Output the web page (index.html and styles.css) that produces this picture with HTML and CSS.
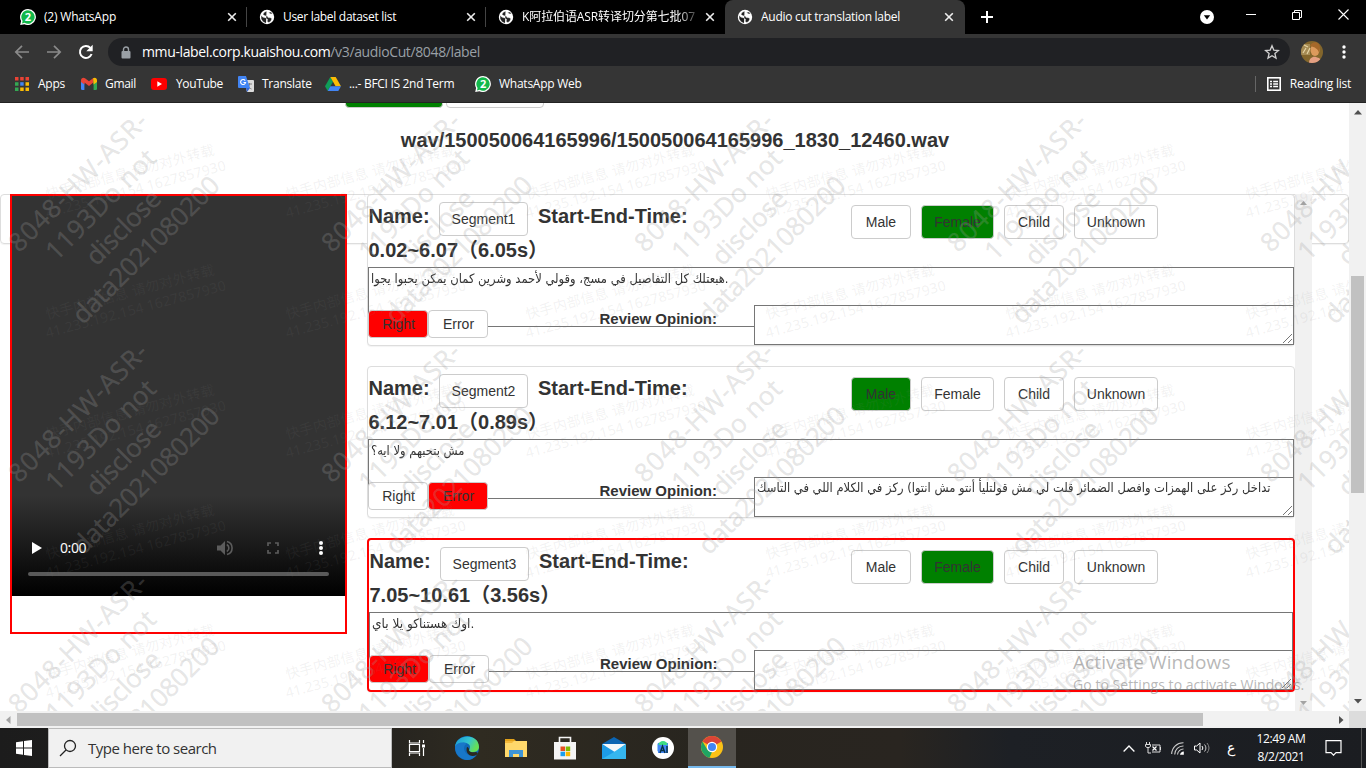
FILE: index.html
```html
<!DOCTYPE html>
<html lang="en">
<head>
<meta charset="utf-8">
<title>Audio cut translation label</title>
<link rel="stylesheet" href="styles.css">
</head>
<body>
<svg class="defs" width="0" height="0" aria-hidden="true">
  <defs>
    <symbol id="globe" viewBox="0 0 16 16"><circle cx="8" cy="8" r="7.2" fill="#fff"/><path d="M7.5 2.2 5 3.6 4 5.6l2 1.2 2.2.2L9 8.6l2.4.2 1.4 1-.9 2.2-2 1.5-1.6-1 .3-2.2L6.800 9 4 8.200 2 6.500 2.200 10 4 12.800 7 14.300 M9.500 3.400l1.800 1.300 2.200.3-1.500-2z" fill="#222" stroke="#fff" stroke-width=".3"/></symbol>
    <symbol id="close" viewBox="0 0 10 10"><path d="M1.200 1.200l7.600 7.600M8.800 1.200L1.200 8.800" stroke="#eee" stroke-width="1.600" fill="none"/></symbol>
    <symbol id="wa" viewBox="0 0 16 16"><path d="M8 0a8 8 0 1 1-3.600 15.200L.2 16l.9-4A8 8 0 0 1 8 0z" fill="#fff"/><path d="M8 1.300a6.700 6.700 0 1 1-3.400 12.500l-2.600.6.600-2.500A6.700 6.700 0 0 1 8 1.300z" fill="#12b84a"/><text x="8" y="12" text-anchor="middle" font-family="Open Sans, sans-serif" font-weight="700" font-size="11" fill="#fff">2</text></symbol>
  </defs>
</svg>

<header class="browser">
  <div class="tabs">
    <div class="tab"><svg class="fav"><use href="#wa"/></svg><span class="tab-title t1">(2) WhatsApp</span><svg class="x"><use href="#close"/></svg></div>
    <div class="tab"><svg class="fav"><use href="#globe"/></svg><span class="tab-title t2">User label dataset list</span><svg class="x"><use href="#close"/></svg></div>
    <div class="tab nosep"><svg class="fav"><use href="#globe"/></svg><span class="tab-title t3">K阿拉伯语ASR转译切分第七批07</span><svg class="x"><use href="#close"/></svg></div>
    <div class="tab active"><svg class="fav"><use href="#globe"/></svg><span class="tab-title t4">Audio cut translation label</span><svg class="x"><use href="#close"/></svg></div>
    <svg class="plus" viewBox="0 0 12 12"><path d="M6 0v12M0 6h12" stroke="#fff" stroke-width="2"/></svg>
    <div class="win">
      <svg width="14" height="14" viewBox="0 0 14 14"><circle cx="7" cy="7" r="7" fill="#fff"/><path d="M3.800 5.200h6.400L7 9.600z" fill="#000"/></svg>
      <svg width="10" height="10" viewBox="0 0 10 10"><path d="M0 4.500h10" stroke="#fff"/></svg>
      <svg width="10" height="10" viewBox="0 0 10 10"><path d="M.5 2.500h7v7h-7zM2.500 2.500v-2h7v7h-2" fill="none" stroke="#fff"/></svg>
      <svg width="11" height="11" viewBox="0 0 11 11"><path d="M.5.5l10 10M10.500.5l-10 10" stroke="#fff" stroke-width="1.100"/></svg>
    </div>
  </div>
  <div class="toolbar">
    <svg class="nav" viewBox="0 0 16 16"><path d="M15 8H2M8 1.800L1.800 8 8 14.200" fill="none" stroke="#8a8a8a" stroke-width="1.700"/></svg>
    <svg class="nav" viewBox="0 0 16 16"><path d="M1 8h13M8 1.800L14.200 8 8 14.200" fill="none" stroke="#8a8a8a" stroke-width="1.700"/></svg>
    <svg class="nav" viewBox="0 0 16 16"><path d="M13.600 10A6 6 0 1 1 12.400 3.900" fill="none" stroke="#fff" stroke-width="2"/><path d="M14.700.8v6.400H8.300z" fill="#fff"/></svg>
    <div class="omnibox">
      <svg width="10" height="13" viewBox="0 0 10 13"><path d="M2.500 5V3.500a2.500 2.500 0 0 1 5 0V5" fill="none" stroke="#9aa0a6" stroke-width="1.400"/><rect x=".5" y="5" width="9" height="7.500" rx="1" fill="#9aa0a6"/></svg>
      <span class="url">mmu-label.corp.kuaishou.com<i>/v3/audioCut/8048/label</i></span>
      <svg class="star" viewBox="0 0 16 16"><path d="M8 1.800l1.800 4.300 4.700.4-3.600 3 1.100 4.600L8 11.700l-4 2.400 1.100-4.600-3.600-3 4.700-.4z" fill="none" stroke="#d0d0d0" stroke-width="1.300"/></svg>
    </div>
    <svg class="avatar" viewBox="0 0 22 22"><defs><clipPath id="av"><circle cx="11" cy="11" r="11"/></clipPath></defs><g clip-path="url(#av)"><rect width="22" height="22" fill="#83662c"/><path d="M0 3h9v11H0z" fill="#a58b54"/><path d="M2 12l3-5M6 13l3-6M3 4l4 2" stroke="#e4d3a4" stroke-width="1.200"/><path d="M8 22c0-5 4-7 7-6s6 2 7 6z" fill="#e5a083"/><ellipse cx="14" cy="9" rx="4.500" ry="6" fill="#dc9a5c"/><path d="M9 5c2-5 9-5 10 1l-1 6c-1-4-4-6-9-7z" fill="#a5682a"/></g></svg>
    <svg class="dots" viewBox="0 0 4 14"><circle cx="2" cy="2" r="1.700" fill="#fff"/><circle cx="2" cy="7" r="1.700" fill="#fff"/><circle cx="2" cy="12" r="1.700" fill="#fff"/></svg>
  </div>
  <div class="bookmarks">
    <div class="bm"><svg class="bi" viewBox="0 0 14 14"><path fill="#ea4335" d="M0 0h3.500v3.500H0zM5.200 0h3.500v3.500H5.200zM10.500 0H14v3.500h-3.500z"/><path fill="#34a853" d="M0 5.200h3.500v3.500H0zM0 10.500h3.500V14H0z"/><path fill="#4285f4" d="M5.200 5.200h3.500v3.500H5.200z"/><path fill="#fbbc05" d="M10.500 5.200H14v3.500h-3.500zM5.200 10.500h3.500V14H5.200zM10.500 10.500H14V14h-3.500z"/></svg><span class="b1">Apps</span></div>
    <div class="bm"><svg class="bi" viewBox="0 0 16 14"><path fill="#4285f4" d="M0 3h3.400v10H1.200A1.200 1.200 0 0 1 0 11.800z"/><path fill="#34a853" d="M12.600 3H16v8.800a1.200 1.200 0 0 1-1.200 1.200h-2.200z"/><path fill="#ea4335" d="M0 3.500C0 1 2.400 0 4 1.300l4 3 4-3v4.500L8 8.900 3.400 5.500v2L0 5z"/><path fill="#fbbc05" d="M12 1.300c2-1.300 4-.2 4 2V5l-3.400 2.500z"/></svg><span class="b2">Gmail</span></div>
    <div class="bm"><svg class="bi" viewBox="0 0 16 12"><rect width="16" height="12" rx="3" fill="#f00"/><path d="M6.300 3.300v5.400L11 6z" fill="#fff"/></svg><span class="b3">YouTube</span></div>
    <div class="bm"><svg class="bi tall" viewBox="0 0 16 16"><path d="M6 4h9a1 1 0 0 1 1 1v10a1 1 0 0 1-1 1H9z" fill="#dcdcdc"/><path d="M9 8h5M11.500 7v1c0 2-1.500 4-2.500 5M10 9.500c.5 1.500 2 3 3.500 3.500" stroke="#777" stroke-width=".9" fill="none"/><path d="M1 0h7l4 12H1a1 1 0 0 1-1-1V1a1 1 0 0 1 1-1z" fill="#4285f4"/><path d="M8 12h4l-3 4z" fill="#3367d6"/><path d="M7.200 4.600A2.500 2.500 0 1 0 7.600 6.500H5.500" fill="none" stroke="#fff" stroke-width="1.100"/></svg><span class="b4">Translate</span></div>
    <div class="bm"><svg class="bi" viewBox="0 0 16 14"><path fill="#0f9d58" d="M5.300 0L0 9.300 2.700 14 8 4.700z"/><path fill="#fbbc05" d="M5.300 0h5.400L16 9.300h-5.400z"/><path fill="#4285f4" d="M5.400 9.300H16L13.300 14H2.700z"/></svg><span class="b5">...- BFCI IS 2nd Term</span></div>
    <div class="bm"><svg class="bi tall"><use href="#wa"/></svg><span class="b6">WhatsApp Web</span></div>
    <div class="reading"><svg width="14" height="14" viewBox="0 0 14 14"><rect x=".8" y=".8" width="12.400" height="12.400" fill="none" stroke="#fff" stroke-width="1.600"/><path d="M3 4.500h2M6.200 4.500H11M3 7h2M6.200 7H11M3 9.500h2M6.200 9.500H11" stroke="#fff" stroke-width="1.300"/></svg><span class="b7">Reading list</span></div>
  </div>
</header>

<main class="viewport">
  <div class="page">
    <div class="top-buttons"><span class="btn green"></span><span class="btn"></span></div>
    <h4 class="wav">wav/150050064165996/150050064165996_1830_12460.wav</h4>
    <section class="panel">
      <div class="player">
        <div class="video">
          <div class="controls">
            <svg width="10" height="12" viewBox="0 0 10 12"><path d="M0 0l10 6-10 6z" fill="#fff"/></svg>
            <span class="time">0:00</span>
            <svg class="vol" width="16" height="16" viewBox="0 0 16 16"><path d="M0 5.500h3.500L8 1v14l-4.500-4.500H0z" fill="#5c5c5c"/><path d="M9.800 4.500a4 4 0 0 1 0 7M10 1.500a6.700 6.700 0 0 1 0 13" fill="none" stroke="#5c5c5c" stroke-width="1.600"/></svg>
            <svg class="full" width="12" height="12" viewBox="0 0 12 12"><path d="M1 4V1h3M8 1h3v3M11 8v3H8M4 11H1V8" fill="none" stroke="#5c5c5c" stroke-width="1.700"/></svg>
            <svg class="more" width="4" height="14" viewBox="0 0 4 14"><circle cx="2" cy="2" r="2" fill="#fff"/><circle cx="2" cy="7" r="2" fill="#fff"/><circle cx="2" cy="12" r="2" fill="#fff"/></svg>
          </div>
          <div class="track"></div>
        </div>
      </div>
      <div class="list">
        <article class="card">
          <div class="head">
            <div class="name"><div class="line"><span class="label">Name:</span><span class="btn seg">Segment1</span><span>Start-End-Time:</span></div><div class="range">0.02~6.07（6.05s）</div></div>
            <div class="kinds"><span class="btn">Male</span><span class="btn green">Female</span><span class="btn">Child</span><span class="btn">Unknown</span></div>
          </div>
          <div class="text"><span class="a1">هبعتلك كل التفاصيل في مسج، وقولي لأحمد وشرين كمان يمكن يحبوا يجوا.</span></div>
          <div class="foot">
            <span class="btn sm red">Right</span><span class="btn sm">Error</span>
            <b class="opinion">Review Opinion:</b>
            <div class="review"></div>
          </div>
        </article>
        <article class="card">
          <div class="head">
            <div class="name"><div class="line"><span class="label">Name:</span><span class="btn seg">Segment2</span><span>Start-End-Time:</span></div><div class="range">6.12~7.01（0.89s）</div></div>
            <div class="kinds"><span class="btn green">Male</span><span class="btn">Female</span><span class="btn">Child</span><span class="btn">Unknown</span></div>
          </div>
          <div class="text"><span class="a2">مش بتحبهم ولا ايه؟</span></div>
          <div class="foot">
            <span class="btn sm">Right</span><span class="btn sm red">Error</span>
            <b class="opinion">Review Opinion:</b>
            <div class="review"><span class="a3">تداخل ركز على الهمزات وافصل الضمائر قلت لي مش قولتليأ أنتو مش انتوا) ركز في الكلام اللي في التاسك</span></div>
          </div>
        </article>
        <article class="card current">
          <div class="head">
            <div class="name"><div class="line"><span class="label">Name:</span><span class="btn seg">Segment3</span><span>Start-End-Time:</span></div><div class="range">7.05~10.61（3.56s）</div></div>
            <div class="kinds"><span class="btn">Male</span><span class="btn green">Female</span><span class="btn">Child</span><span class="btn">Unknown</span></div>
          </div>
          <div class="text"><span class="a4">اوك هستناكو يلا باي.</span></div>
          <div class="foot">
            <span class="btn sm red">Right</span><span class="btn sm">Error</span>
            <b class="opinion">Review Opinion:</b>
            <div class="review"></div>
          </div>
        </article>
      </div>
      <div class="inner-scroll"><svg width="7" height="4" viewBox="0 0 7 4"><path d="M0 4l3.500-4L7 4z" fill="#a3a3a3"/></svg><svg width="7" height="4" viewBox="0 0 7 4"><path d="M0 0l3.500 4L7 0z" fill="#a3a3a3"/></svg></div>
    </section>

    <svg class="watermark" width="1349" height="608" viewBox="0 103 1349 608">
      <defs>
        <g id="big" transform="rotate(-45)" text-anchor="middle">
          <text y="-39" textLength="184">8048-HW-ASR-</text>
          <text y="-7" textLength="144">1193Do not</text>
          <text y="25" textLength="94">disclose</text>
          <text y="57" textLength="196">data2021080200</text>
        </g>
        <g id="big-row"><use href="#big"/><use href="#big" transform="translate(313)"/><use href="#big" transform="translate(626)"/><use href="#big" transform="translate(939)"/><use href="#big" transform="translate(1252)"/></g>
        <g id="small" transform="rotate(-15)">
          <text x="5" y="-18" textLength="174">快手内部信息 请勿对外转载</text>
          <text x="0" y="0" textLength="186">41.235.192.154 1627857930</text>
        </g>
        <g id="small-row"><use href="#small"/><use href="#small" transform="translate(240)"/><use href="#small" transform="translate(480)"/><use href="#small" transform="translate(720)"/><use href="#small" transform="translate(960)"/><use href="#small" transform="translate(1200)"/></g>
      </defs>
      <g class="wm-big"><use href="#big-row" transform="translate(112 216)"/><use href="#big-row" transform="translate(112 446.500)"/><use href="#big-row" transform="translate(112 677)"/></g>
      <g class="wm-small"><use href="#small-row" transform="translate(47 218)"/><use href="#small-row" transform="translate(47 338)"/><use href="#small-row" transform="translate(47 458)"/><use href="#small-row" transform="translate(47 578)"/><use href="#small-row" transform="translate(47 698)"/></g>
    </svg>
  </div>
  <div class="vscroll"><svg width="8" height="5" viewBox="0 0 8 5"><path d="M0 4.500L4 0l4 4.500z" fill="#505050"/></svg><div class="vthumb"></div><svg width="8" height="5" viewBox="0 0 8 5"><path d="M0 0l4 4.500L8 0z" fill="#505050"/></svg></div>
  <div class="hscroll"><svg width="5" height="8" viewBox="0 0 5 8"><path d="M4.500 0L0 4l4.500 4z" fill="#a3a3a3"/></svg><div class="hthumb"></div><svg width="5" height="8" viewBox="0 0 5 8"><path d="M0 0l4.500 4L0 8z" fill="#505050"/></svg></div>
  <div class="corner"></div>
</main>

<div class="activate"><p class="act1">Activate Windows</p><p class="act2">Go to Settings to activate Windows.</p></div>

<footer class="taskbar">
  <div class="start"><svg width="16" height="16" viewBox="0 0 16 16"><path d="M0 2.200l7-1v6.300H0zM8 1.100L16 0v7.500H8zM0 8.500h7v6.300l-7-1zM8 8.500h8V16l-8-1.100z" fill="#fff"/></svg></div>
  <div class="search"><svg width="18" height="18" viewBox="0 0 18 18"><circle cx="11" cy="7" r="5.500" fill="none" stroke="#222" stroke-width="1.300"/><path d="M7 11L1 17" stroke="#222" stroke-width="1.300"/></svg><span class="ph">Type here to search</span></div>
  <div class="apps">
    <div><svg width="18" height="16" viewBox="0 0 18 16"><path d="M1.500 0v3h10V0M1.500 16v-3h10v3M1.500 4.500h10v7h-10zM15.500 0v3M15.500 8v8" fill="none" stroke="#fff" stroke-width="1.200"/><path d="M14 4.500h3v3h-3z" fill="#fff"/></svg></div>
    <div><svg width="24" height="24" viewBox="0 0 24 24"><defs><linearGradient id="e1" x1="0" x2="1" y2=".4"><stop offset="0" stop-color="#1798d8"/><stop offset=".6" stop-color="#35c4d0"/><stop offset="1" stop-color="#66e055"/></linearGradient></defs><circle cx="12" cy="12" r="12" fill="#0f67b6"/><path d="M0 11C1-3 24-3 24 11c0 5-6 6-9.500 4.500C13 14.500 15 14 15 11c0-3-4-5-8-4-4 .5-6 2-7 4z" fill="url(#e1)"/><path d="M0 11c1-4 8-6 12-3-4 1-4 7 0 10 3 2 6 2 9.500.5C18 24 12 25 8 23 3 21 0 16 0 11z" fill="#1877c9"/><path d="M12 11c1 0 2 1 2 2.500S15 17 21 16l2 1-1.500 2C15 22 10 17 12 11z" fill="#2b2820"/></svg></div>
    <div><svg width="22" height="19" viewBox="0 0 22 19"><path d="M0 0h9l2 2H0z" fill="#e3a21a"/><path d="M0 2h22v16H0z" fill="#ffd86b"/><path d="M0 2h9l-2 2H0z" fill="#f5b93a"/><path d="M4 11h14v7h-4v-3H8v3H4z" fill="#3d94d6"/></svg></div>
    <div><svg width="24" height="24" viewBox="0 0 24 24"><path d="M6.500 7V1.500h11V7" fill="none" stroke="#f4f4f4" stroke-width="1.600"/><path d="M1 6h22v17.500H1z" fill="#f4f4f4"/><path d="M7.500 10.500H12V15H7.500z" fill="#e74f21"/><path d="M12.700 10.500h4.500V15h-4.500z" fill="#7fba00"/><path d="M7.500 15.700H12v4.500H7.500z" fill="#1b9fee"/><path d="M12.700 15.700h4.500v4.500h-4.500z" fill="#fbb900"/></svg></div>
    <div><svg width="24" height="22" viewBox="0 0 24 22"><path d="M0 7l12-7 12 7v15H0z" fill="#0b65b3"/><path d="M0 7h24l-12 9z" fill="#f3f7fa"/><path d="M0 7l24 15H0z" fill="#1d9be6"/><path d="M24 7v15H0l12-7z" fill="#35b6ef"/></svg></div>
    <div><svg width="22" height="22" viewBox="0 0 22 22"><circle cx="11" cy="11" r="11" fill="#fff"/><path d="M5 7l2-1.500V15L5 14z" fill="#90caf9"/><path d="M6 6h10v10H6z" fill="#4285f4"/><path d="M6.500 8a4.500 4 0 0 1 9 0z" fill="#3ddc84"/><path d="M8 16l2.500-7L13 16M9 13.500h3M15 9v7" fill="none" stroke="#073042" stroke-width="1.400"/></svg></div>
    <div class="open"><svg width="22" height="22" viewBox="0 0 22 22"><circle cx="11" cy="11" r="11" fill="#fbc116"/><path d="M11 11L1.500 5.500A11 11 0 0 1 20.500 5.500z" fill="#db4437"/><path d="M1.500 5.500l5 8.500 4.500 2-2.500 5.700A11 11 0 0 1 1.500 5.500z" fill="#1fa463"/><circle cx="11" cy="11" r="5.200" fill="#fff"/><circle cx="11" cy="11" r="4" fill="#4285f4"/></svg></div>
  </div>
  <div class="tray">
    <svg width="12" height="7" viewBox="0 0 12 7"><path d="M.6 6.500L6 1l5.400 5.500" fill="none" stroke="#fff" stroke-width="1.300"/></svg>
    <svg width="16" height="12" viewBox="0 0 16 12"><path d="M1.500 0v2M4.500 0v2M.5 2.500h5v2l-1.500 1H2l-1.500-1zM3 5.500V11h3M7 3h8v7H7M15.500 5v3" fill="none" stroke="#ddd"/><path d="M7.500 4.500l4 4M11.500 4.500l-4 4" stroke="#fff" stroke-width="1.200"/></svg>
    <svg width="13" height="13" viewBox="0 0 13 13"><path d="M.7 12A11.500 11.500 0 0 1 12.500.8M3.700 12.500A8.500 8.500 0 0 1 12.500 4M6.500 12.500A6 6 0 0 1 12.500 7" fill="none" stroke="#ccc" stroke-width="1.100"/><path d="M9 12.800A4 4 0 0 1 12.800 9.500v3.300z" fill="#fff"/></svg>
    <svg width="17" height="12" viewBox="0 0 17 12"><path d="M.5 4h2.200L6 1v10L2.700 8H.5z" fill="none" stroke="#fff"/><path d="M8 4a3 3 0 0 1 0 4" fill="none" stroke="#fff"/><path d="M10.500 2.500a5 5 0 0 1 0 7" fill="none" stroke="#ccc"/><path d="M13 1a8 8 0 0 1 0 10" fill="none" stroke="#888"/></svg>
    <span class="lang">ع</span>
    <div class="clock"><span class="c1">12:49 AM</span><span class="c2">8/2/2021</span></div>
    <svg width="17" height="16" viewBox="0 0 17 16"><path d="M1 .7h15v12h-5L8.500 15.200 6 12.700H1z" fill="none" stroke="#fff" stroke-width="1.200"/></svg>
    <i class="peek"></i>
  </div>
</footer>
</body>
</html>
```

FILE: styles.css
```css
* { box-sizing: border-box; }
body { margin: 0; width: 1366px; height: 768px; overflow: hidden; display: flex; flex-direction: column; font: 14px/20px "Liberation Sans", Arial, sans-serif; color: #333; background: #fff; }
svg { display: block; flex: none; }
.defs { position: absolute; }
h4, p { margin: 0; }

/* browser frame */
.browser { height: 103px; flex: none; background: #353535; border-bottom: 1px solid #232323; font: 12px/16px "Open Sans", "Noto Sans CJK SC", sans-serif; color: #fff; }
.tabs { height: 34px; background: #000; display: flex; padding-left: 8px; }
.tab { width: 239px; height: 34px; display: flex; align-items: center; padding: 0 9px 0 12px; border-right: 1px solid transparent; position: relative; }
.tab:not(.nosep):not(.active)::after { content: ""; width: 1px; height: 20px; background: #444; position: absolute; right: -1px; top: 7px; }
.tab.active { background: #353535; border-radius: 8px 8px 0 0; width: 240px; }
.fav { width: 16px; height: 16px; margin-right: 8px; }
.tab-title { width: 180px; flex: none; white-space: nowrap; overflow: hidden; }
.x { width: 10px; height: 10px; margin-left: 3px; }
.t1 { letter-spacing: -.2px; }
.t2 { letter-spacing: -.3px; }
.t3 { width: 178px; margin-right: 2px; letter-spacing: -.1px; -webkit-mask-image: linear-gradient(90deg, #000 155px, transparent 180px); mask-image: linear-gradient(90deg, #000 155px, transparent 180px); }
.t4 { letter-spacing: -.28px; }
.plus { width: 12px; height: 12px; margin: 11px 0 0 16px; }
.win { margin-left: auto; display: grid; grid-template-columns: 14px 10px 10px 11px; column-gap: 36px; align-items: center; padding-right: 17px; height: 29px; }
.win svg:first-child { margin: 4px 0 0 4px; }
.toolbar { height: 36px; display: flex; align-items: center; padding: 0 19px 0 14px; }
.nav { width: 16px; height: 16px; margin-right: 16px; }
.omnibox { width: 1182px; height: 28px; border-radius: 14px; background: #202124; display: flex; align-items: center; padding: 0 10px 0 13px; margin-left: -2px; }
.url { flex: 1; margin-left: 11px; font-size: 14px; letter-spacing: -.37px; }
.url i { font-style: normal; color: #9aa0a6; }
.star { width: 16px; height: 16px; }
.avatar { width: 22px; height: 22px; margin-left: 11px; }
.dots { width: 4px; height: 14px; margin-left: 19px; }
.bookmarks { height: 28px; display: grid; grid-template-columns: 67px 70px 87px 87px 150px 130px 1fr; padding: 0 15px 0 14px; align-items: center; letter-spacing: -.25px; }
.bm { display: flex; align-items: center; gap: 8px; white-space: nowrap; }
.bi { width: 16px; height: 14px; }
.bi.tall { height: 16px; }
.b2 { letter-spacing: -.3px; }
.b3 { margin-left: 1px; letter-spacing: -.35px; }
.b5 { letter-spacing: -.3px; }
.reading { justify-self: end; display: flex; align-items: center; gap: 9px; border-left: 1px solid #666; height: 16px; padding-left: 11px; white-space: nowrap; }

/* page */
.viewport { height: 625px; flex: none; display: grid; grid-template: 608px 17px / 1349px 17px; }
.page { position: relative; overflow: hidden; background: #fff; }
.btn { display: inline-block; font: 14px/20px "Liberation Sans", Arial, sans-serif; color: #333; padding: 6px 0; border: 1px solid #ccc; border-radius: 4px; background: #fff; white-space: nowrap; text-align: center; }
.btn.green { background: #008000; }
.btn.red { background: #f00; }
.btn.sm { padding: 3px 0 3px 1px; width: 60px; flex: none; }
.top-buttons { height: 5px; display: flex; align-items: flex-end; gap: 3px; padding-left: 345px; }
.top-buttons .btn { width: 98px; height: 34px; flex: none; }
.wav { margin-top: 21px; height: 22px; font-size: 20px; line-height: 22px; text-align: center; padding-left: 1px; }
.panel { margin-top: 43px; height: 50px; border: 1px solid #ddd; border-radius: 4px; box-shadow: 0 1px 1px rgba(0,0,0,.05); display: flex; align-items: flex-start; padding-left: 9px; }
.player { width: 337px; height: 440px; margin-top: -1px; border: 2px solid #f00; background: #fff; flex: none; }
.video { height: 400px; background: linear-gradient(#333 0 300px, #000 400px); display: flex; flex-direction: column; padding: 343px 16px 0; }
.controls { height: 18px; display: flex; align-items: center; padding-left: 4px; }
.time { color: #fff; margin-left: 18px; width: 157px; font: 14px/18px "Noto Sans", sans-serif; letter-spacing: -.4px; }
.full { margin-left: 34px; }
.more { margin-left: 40px; }
.track { height: 4px; margin-top: 15px; border-radius: 2px; background: #5a5a5a; }
.list { margin: -1px 0 0 20px; width: 928px; flex: none; }
.card { height: 152px; margin-bottom: 20px; border: 1px solid #ddd; border-radius: 4px; background: #fff; box-shadow: 0 1px 1px rgba(0,0,0,.05); }
.card.current { height: 154px; border: 2px solid #f00; }
.head { height: 72px; display: flex; }
.name { width: 483px; padding: 4px 0 0 .5px; font: 700 20px/34px "Liberation Sans", "Noto Sans CJK SC", sans-serif; }
.line { height: 34px; display: flex; white-space: nowrap; }
.label { width: 70.500px; }
.seg { width: 89px; height: 34px; margin: 3px 10px 0 0; flex: none; }
.range { line-height: 34px; white-space: nowrap; }
.kinds { display: grid; grid-template-columns: 60px 73px 60px 84px; gap: 10px; padding-top: 10px; align-items: start; }
.current .name { width: 482px; }
.text { height: 60px; border: 1px solid #767676; padding: 2px; }
.text, .review { font: 13px/18px "DejaVu Sans", sans-serif; white-space: nowrap; }
.text span, .review span { display: inline-block; transform-origin: 0 50%; transform: scaleX(.888); }
.text .a4 { transform: scaleX(.935); }
.foot { position: relative; margin-top: -22px; display: flex; height: 40px; }
.foot .btn { margin-top: 5px; height: 28px; }
.opinion { flex: none; margin: 4px 0 0 111.500px; width: 154.500px; font-size: 15px; line-height: 20px; }
.current .opinion { margin-left: 111px; width: 154px; }
.review { flex: 1; min-width: 0; height: 40px; border: 1px solid #767676; background: #fff; padding: 1px 2px; position: relative; }
.review::after { content: ""; position: absolute; right: 1px; bottom: 1px; width: 9px; height: 9px; background: linear-gradient(135deg, transparent 49%, #777 49% 55%, transparent 55% 75%, #777 75% 81%, transparent 81%); }
.inner-scroll { width: 17px; height: 517px; margin-top: -1px; background: #f1f1f1; display: flex; flex-direction: column; justify-content: space-between; align-items: center; padding: 7px 0 6px; }
.watermark { position: absolute; left: 0; top: 0; }
.wm-big { font: 26px "Noto Sans", sans-serif; fill: rgba(160,160,160,.25); stroke: rgba(160,160,160,.12); stroke-width: .5px; }
.wm-small { font: 14px "Noto Sans", "Noto Sans CJK SC", sans-serif; fill: rgba(128,128,128,.11); }

/* scrollbars */
.vscroll { background: #f1f1f1; display: flex; flex-direction: column; align-items: center; padding: 7px 0; }
.vthumb { width: 13px; height: 217px; background: #c1c1c1; margin: 161px 0 auto; }
.hscroll { background: #f1f1f1; display: flex; align-items: center; padding: 0 5px 0 6px; }
.hthumb { height: 13px; width: 1186px; background: #c1c1c1; margin: 0 auto 0 6px; }
.corner { background: #dcdcdc; }

.activate { position: absolute; left: 1073px; top: 650px; color: rgba(130,130,130,.58); font-family: "Open Sans", sans-serif; white-space: nowrap; }
.act1 { font-size: 19px; line-height: 24px; letter-spacing: .1px; }
.act2 { font-size: 14px; line-height: 22px; letter-spacing: .05px; }

/* taskbar */
.taskbar { height: 40px; flex: none; display: flex; background: linear-gradient(90deg, #1c1c1c 0, #25231f 380px, #2f2b21 480px, #28251f 700px, #292520 900px, #1d2025 1010px, #1b1d21 1366px); color: #fff; font-family: "Open Sans", sans-serif; }
.start { width: 48px; display: grid; place-items: center; }
.search { width: 344px; background: #f1f1f1; border: 1px solid #bbb; display: flex; align-items: center; padding-left: 10px; color: #333; }
.ph { margin-left: 11px; font-size: 15px; letter-spacing: -.5px; }
.apps { display: flex; }
.apps div { width: 49px; display: grid; place-items: center; }
.apps div:nth-child(2) { margin-left: 1px; }
.apps .open { width: 48px; margin-left: 1px; background: #54514c; border-bottom: 2px solid #76b9ed; }
.tray { margin-left: auto; display: flex; align-items: center; }
.tray svg { margin-right: 10px; }
.lang { margin: 0 15px 0 6px; width: 9px; font: 14px/20px "DejaVu Sans", sans-serif; }
.clock { width: 60px; margin-right: 14px; display: flex; flex-direction: column; align-items: center; font-size: 12px; line-height: 18px; letter-spacing: -.4px; white-space: nowrap; }
.tray .peek { width: 1px; height: 40px; background: #555; margin: 0 4px 0 9px; }
```
